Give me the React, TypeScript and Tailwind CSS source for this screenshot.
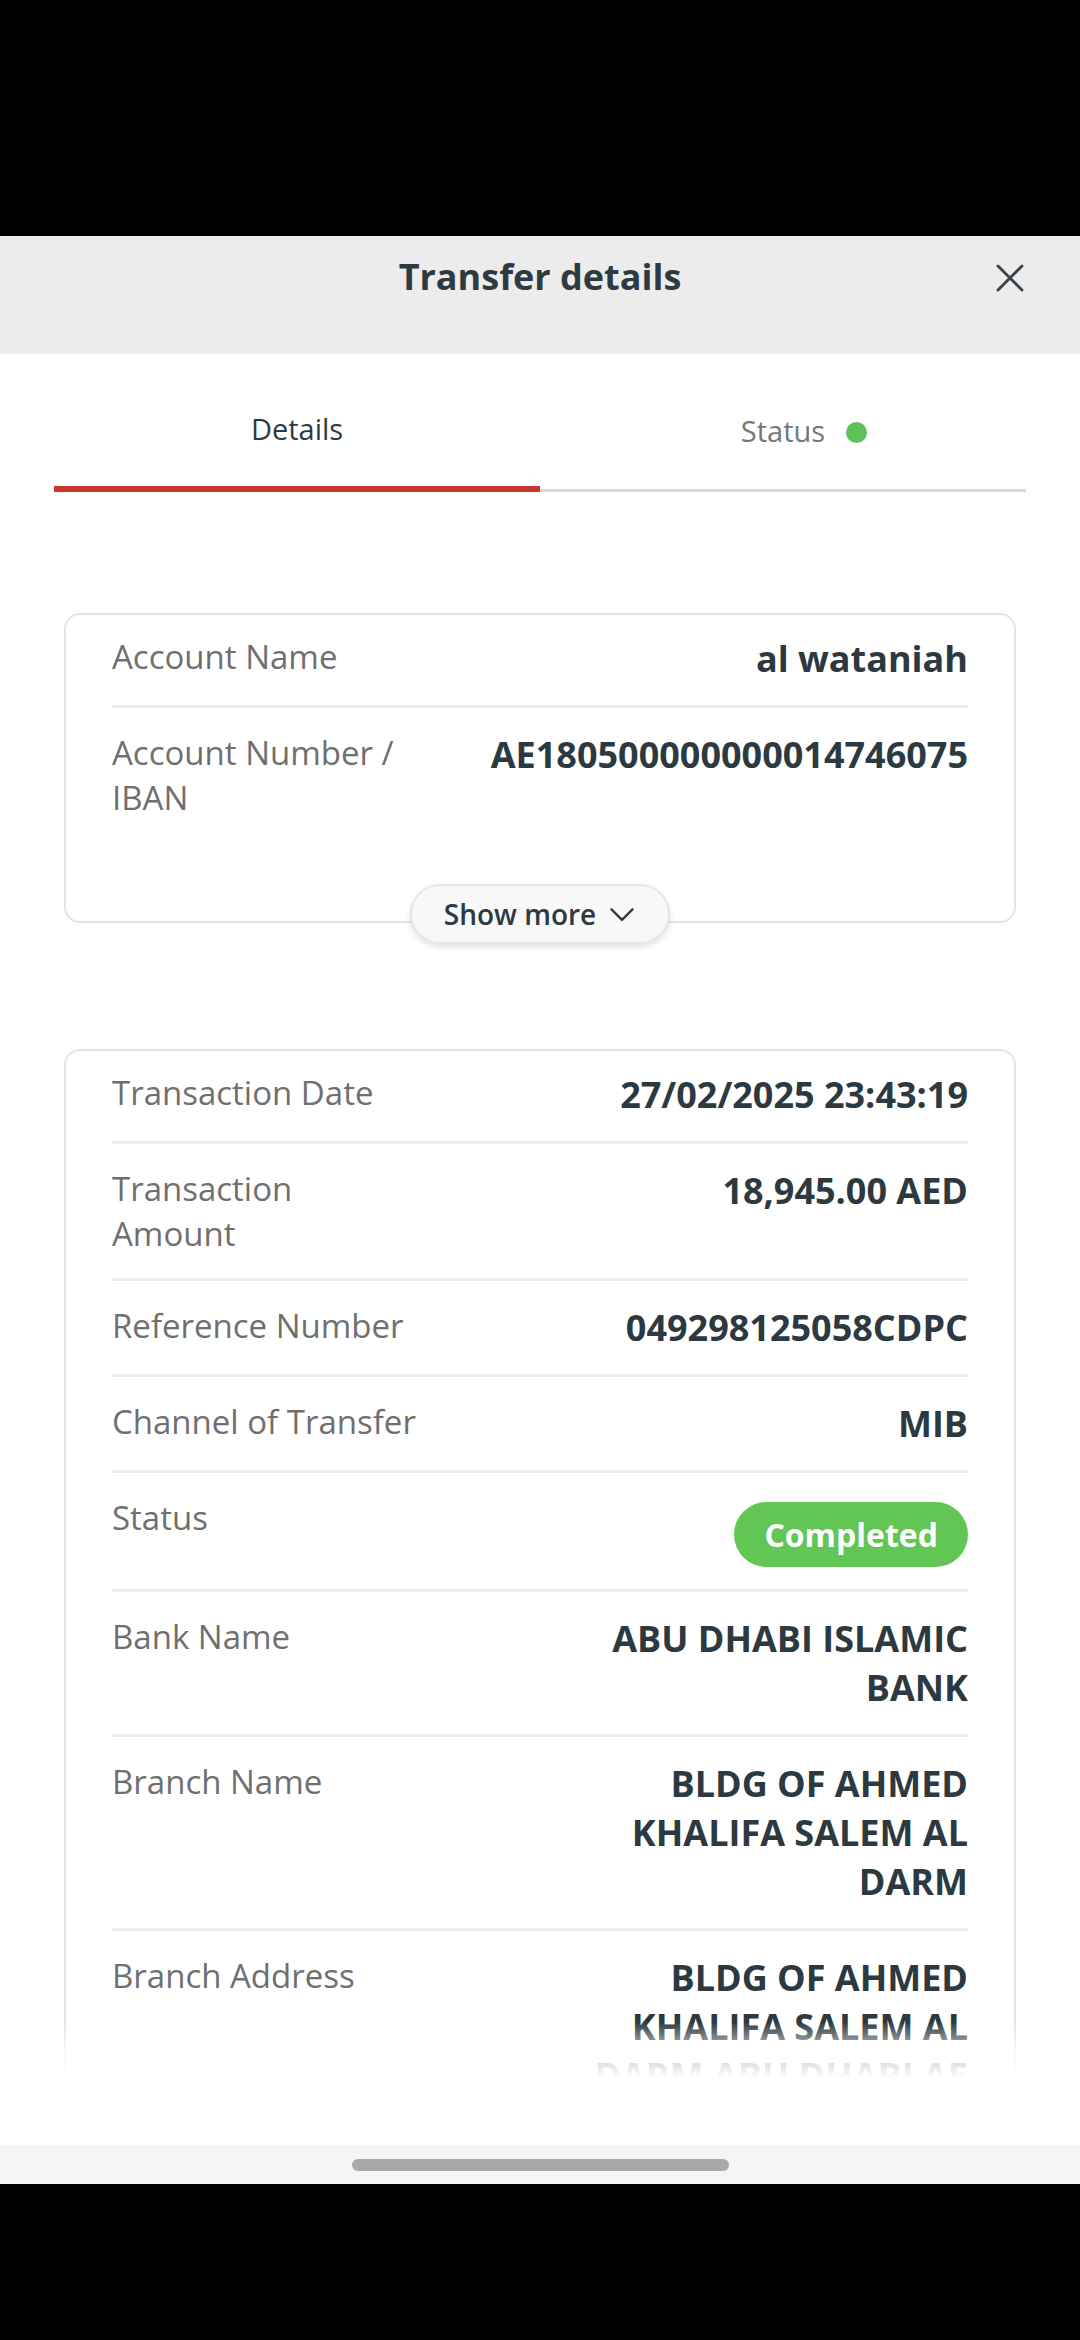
import type { ReactNode } from "react";

type Row = {
  label: string;
  value?: string;
  badge?: string;
  wide?: boolean;
};

const accountRows: Row[] = [
  { label: "Account Name", value: "al wataniah" },
  { label: "Account Number / IBAN", value: "AE180500000000014746075", wide: true },
];

const txRows: Row[] = [
  { label: "Transaction Date", value: "27/02/2025 23:43:19" },
  { label: "Transaction Amount", value: "18,945.00 AED" },
  { label: "Reference Number", value: "049298125058CDPC" },
  { label: "Channel of Transfer", value: "MIB" },
  { label: "Status", badge: "Completed" },
  { label: "Bank Name", value: "ABU DHABI ISLAMIC BANK" },
  { label: "Branch Name", value: "BLDG OF AHMED KHALIFA SALEM AL DARM" },
  { label: "Branch Address", value: "BLDG OF AHMED KHALIFA SALEM AL DARM ABU DHABI AE" },
  { label: "Country", value: "UNITED ARAB EMIRATES" },
];

function DetailRow({ row, last }: { row: Row; last: boolean }) {
  return (
    <div
      className={
        "flex items-start justify-between py-[22px] first:pt-[19px] " +
        (last ? "" : "border-b-[3px] border-[#ebebeb]")
      }
    >
      <div className="w-[305px] shrink-0 text-[33px] leading-[45px] text-[#6f6f6f]">{row.label}</div>
      {row.badge ? (
        <span className="mt-[7px] flex h-[65px] items-center rounded-full bg-[#62c655] px-[30px] text-[32px] font-bold text-white">
          {row.badge}
        </span>
      ) : (
        <div
          className={
            "text-right text-[36px] font-bold leading-[49px] text-[#2d3940] " +
            (row.wide ? "" : "max-w-[400px]")
          }
        >
          {row.value}
        </div>
      )}
    </div>
  );
}

function Card({ rows, children }: { rows: Row[]; children?: ReactNode }) {
  return (
    <div className="relative mx-[64px] rounded-[16px] border-2 border-[#e3e3e3] bg-white px-[46px]">
      {rows.map((r, i) => (
        <DetailRow key={r.label} row={r} last={i === rows.length - 1} />
      ))}
      {children}
    </div>
  );
}

export default function App() {
  return (
    <div
      className="flex h-[2340px] w-[1080px] flex-col bg-black"
      style={{ fontFamily: '"Open Sans", "Noto Sans", sans-serif' }}
    >
      <div className="h-[236px] shrink-0" />

      {/* header */}
      <header className="relative h-[118px] shrink-0 bg-[#ececec]">
        <h1 className="pt-[17px] text-center text-[36px] font-bold leading-[48px] text-[#2e3a42]">
          Transfer details
        </h1>
        <button className="absolute right-[52px] top-[24px] flex h-[36px] w-[36px] items-center justify-center">
          <svg viewBox="0 0 24 24" className="h-[36px] w-[36px]" fill="none" stroke="#3a434a" strokeWidth={1.9} strokeLinecap="round">
            <path d="M4 4l16 16M20 4L4 20" />
          </svg>
        </button>
      </header>

      {/* body */}
      <main className="flex flex-1 flex-col bg-white">
        <div className="mx-[54px] flex h-[138px] shrink-0 items-end">
          <div className="flex h-full flex-1 flex-col items-center justify-end">
            <span className="mb-[37px] text-[29px] leading-[40px] text-[#2e3a42]">Details</span>
            <div className="h-[6px] w-full bg-[#c9382e]" />
          </div>
          <div className="flex h-full flex-1 flex-col items-center justify-end">
            <span className="relative mb-[38px] text-[29px] leading-[40px] text-[#777]">
              Status
              <span className="absolute left-[calc(100%+21px)] top-[11px] h-[21px] w-[21px] rounded-full bg-[#5cc259]" />
            </span>
            <div className="h-[3px] w-full bg-[#d8d8d8]" />
          </div>
        </div>

        <div className="relative h-[1586px] shrink-0 overflow-hidden">
          <div className="pt-[121px]">
            <Card rows={accountRows}>
              <div className="h-[79px]" />
              <button className="absolute bottom-[-23px] left-1/2 flex h-[60px] w-[260px] -translate-x-1/2 items-center justify-center gap-[12px] rounded-full border-2 border-[#e6e6e6] bg-[#f8f8f8] text-[28px] font-semibold text-[#2e3a42] shadow-[0_3px_6px_rgba(0,0,0,0.12)]">
                Show more
                <svg viewBox="0 0 24 24" className="h-[28px] w-[28px]" fill="none" stroke="#2e3a42" strokeWidth={2} strokeLinecap="round" strokeLinejoin="round">
                  <path d="M3 8l9 9 9-9" />
                </svg>
              </button>
            </Card>
            <div className="h-[126px]" />
            <Card rows={txRows} />
          </div>
          <div className="pointer-events-none absolute inset-x-0 bottom-0 h-[56px] bg-gradient-to-b from-white/0 via-white/70 to-white" />
        </div>

        <div className="flex-1" />
      </main>

      {/* nav bar */}
      <div className="flex h-[39px] shrink-0 justify-center bg-[#f5f5f7] pt-[14px]">
        <div className="h-[12px] w-[377px] rounded-full bg-[#a9a9a9]" />
      </div>
      <div className="h-[156px] shrink-0" />
    </div>
  );
}
